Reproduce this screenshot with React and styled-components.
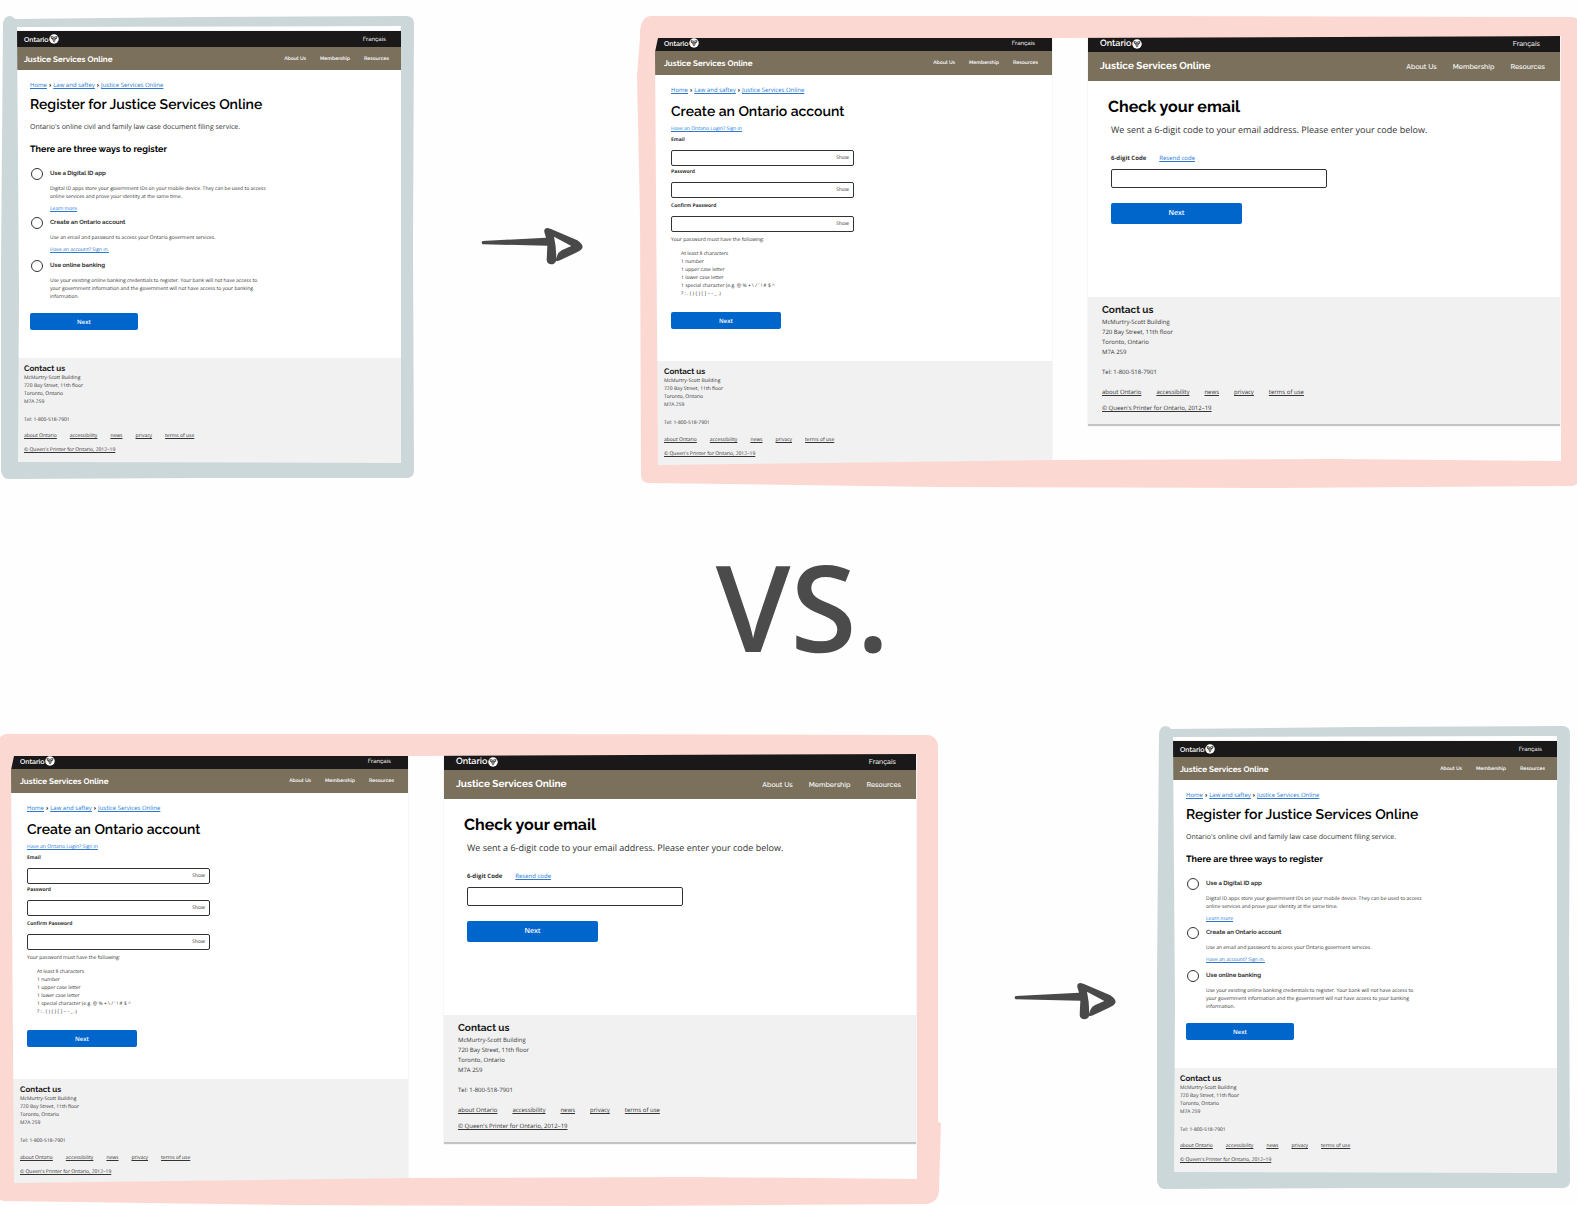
import React, { useId } from "react";
import styled, { createGlobalStyle, ThemeProvider } from "styled-components";

const GlobalStyle = createGlobalStyle`
  *, *::before, *::after { box-sizing: border-box; }
  html, body { margin: 0; background: #fefefe; }
  body { font-family: "Open Sans", "Noto Sans", sans-serif; color: #333; overflow-x: hidden; text-rendering: geometricPrecision; }
  h1, h2, h3, p, ul, address { margin: 0; padding: 0; font-style: normal; }
  ul { list-style: none; }
  button, input { font: inherit; color: inherit; margin: 0; padding: 0; border: 0; background: none; text-rendering: inherit; }
`;

const heading = `"Raleway", "Lato", "Open Sans", sans-serif`;

/* Type and spacing for the three magnifications at which screens are shown. */
const small = {
  bar: 16, band: 23, edge: 7, end: 12, brand: 7, lang: 6, langEnd: 15, title: 8, nav: 5, navWeight: 700, navGap: 14,
  h1: 14, h1Line: 18, h1Weight: 600, lead: 7, leadGap: 8, pad: "11px 13px 28px", button: 108, buttonHeight: 17, buttonText: 6,
  foot: 5, footLine: 8, contact: 8, contactLine: 11, footPad: "5px 7px 9px", linkGap: 13, footGap: 8,
};
const medium = {
  ...small, band: 24, edge: 9, end: 14, langEnd: 17, pad: "11px 16px 32px", button: 110,
  footPad: "5px 9px 20px", footGap: 9,
};
const large = {
  bar: 17, band: 29, edge: 12, end: 15, brand: 9, lang: 7, langEnd: 20, title: 10, nav: 7, navWeight: 600, navGap: 16,
  h1: 16, h1Line: 22, h1Weight: 700, lead: 9, leadGap: 6, pad: "15px 20px 73px", button: 131, buttonHeight: 21, buttonText: 7,
  foot: 6, footLine: 10, contact: 10, contactLine: 12, footPad: "8px 14px 11px", linkGap: 15, footGap: 10,
};

const Board = styled.main`
  display: flex;
  flex-direction: column;
  padding-top: 16px;
  overflow: hidden;
`;
const TopRow = styled.section`
  display: grid;
  grid-template-columns: 414fr 222fr 941fr;
  align-items: start;
`;
const BottomRow = styled.section`
  display: grid;
  grid-template-columns: 941fr 223fr 414fr;
  align-items: start;
  margin: 0 7px 0 -8px;
`;
const Versus = styled.p`
  padding-left: 28px;
  font-size: 120px;
  font-weight: 600;
  line-height: 238px;
  text-align: center;
  color: #4b4b4b;
`;

const Frame = styled.div`
  position: relative;
  display: grid;
`;
const BlueFrame = styled(Frame)`
  padding: 15px 13px 16px 17px;
`;
const PinkFrame = styled(Frame)`
  grid-template-columns: 397fr 472fr;
  column-gap: 36px;
  align-items: start;
  height: 472px;
  margin-top: ${(p) => (p.$lowered ? "8px" : 0)};
  padding: 19px 17px 0 19px;
`;
const Brushwork = styled.svg`
  position: absolute;
  inset: 0;
  width: 100%;
  height: 100%;
  overflow: visible;
  pointer-events: none;
`;
const ArrowSlot = styled.div`
  display: flex;
  justify-content: center;
  padding: ${(p) => p.$drop}px 0 0 ${(p) => p.$lead}px;
`;

const Screen = styled.article`
  display: flex;
  flex-direction: column;
  min-width: 0;
  background: #fff;
  box-shadow: 0 0 1px #ccc;
`;
const TopBar = styled.header`
  display: flex;
  align-items: center;
  justify-content: space-between;
  height: ${(p) => p.theme.bar}px;
  padding: 0 ${(p) => p.theme.langEnd}px 0 ${(p) => p.theme.edge}px;
  background: #1a1818;
  color: #fff;
  font-family: ${heading};
  font-size: ${(p) => p.theme.lang}px;
  font-weight: 500;
`;
const Brand = styled.span`
  display: flex;
  align-items: center;
  gap: 1px;
  font-size: ${(p) => p.theme.brand}px;
  font-weight: 600;
`;
const BarLink = styled.a`
  color: #eee;
  text-decoration: none;
`;
const Band = styled.div`
  display: flex;
  align-items: center;
  justify-content: space-between;
  height: ${(p) => p.theme.band}px;
  padding: 0 ${(p) => p.theme.end}px 0 ${(p) => p.theme.edge}px;
  background: #7b705b;
  color: #fff;
  font-family: ${heading};
`;
const SiteTitle = styled.span`
  font-size: ${(p) => p.theme.title}px;
  font-weight: 700;
`;
const Nav = styled.nav`
  display: flex;
  gap: ${(p) => p.theme.navGap}px;
  font-size: ${(p) => p.theme.nav}px;
  font-weight: ${(p) => p.theme.navWeight};
`;
const Body = styled.div`
  padding: ${(p) => p.theme.pad};
`;
const Crumbs = styled.nav`
  display: flex;
  gap: 2px;
  font-size: 6px;
  line-height: 8px;
  color: #000;
`;
const Link = styled.a`
  color: #2b78cf;
  text-decoration: underline;
`;
const Title = styled.h1`
  margin-top: ${(p) => p.$gap || 0}px;
  font-family: ${heading};
  font-size: ${(p) => p.theme.h1}px;
  line-height: ${(p) => p.theme.h1Line}px;
  font-weight: ${(p) => p.theme.h1Weight};
  color: #000;
`;
const Lead = styled.p`
  margin-top: ${(p) => p.theme.leadGap}px;
  font-size: ${(p) => p.theme.lead}px;
  line-height: 12px;
`;
const Subtitle = styled.h2`
  margin-top: 10px;
  font-family: ${heading};
  font-size: 9px;
  line-height: 12px;
  font-weight: 700;
  color: #000;
`;
const Options = styled.div`
  padding-top: 8px;
`;
const Option = styled.div`
  display: grid;
  grid-template-columns: 14px 1fr;
  column-gap: 6px;
  align-items: center;
  padding-top: ${(p) => p.$gap}px;
`;
const Radio = styled.input`
  appearance: none;
  width: 12px;
  height: 12px;
  margin-left: 1px;
  border: 1px solid #333;
  border-radius: 50%;
`;
const OptionLabel = styled.label`
  font-family: ${heading};
  font-size: 6px;
  line-height: 12px;
  font-weight: 700;
`;
const Detail = styled.div`
  grid-column: 2;
  display: grid;
  justify-items: start;
  gap: 4px;
  max-width: 218px;
  padding-top: 5px;
  font-size: 5px;
  line-height: 8px;
`;
const Next = styled.button`
  display: block;
  width: ${(p) => p.theme.button}px;
  height: ${(p) => p.theme.buttonHeight}px;
  margin-top: ${(p) => p.$gap}px;
  border-radius: 2px;
  background: #0066cc;
  color: #fff;
  font-size: ${(p) => p.theme.buttonText}px;
  font-weight: 600;
  text-align: center;
`;
const SignIn = styled.p`
  margin-top: 4px;
  font-size: 5px;
  line-height: 8px;
`;
const Field = styled.div`
  display: grid;
  gap: 6px;
  max-width: 183px;
  padding-top: ${(p) => p.$gap}px;
`;
const FieldLabel = styled.label`
  font-size: ${(p) => p.theme.foot}px;
  line-height: 8px;
  font-weight: 700;
`;
const InputBox = styled.div`
  display: flex;
  height: 16px;
  padding-right: 4px;
  border: 1px solid #333;
  border-radius: 2px;
`;
const Input = styled.input`
  flex: 1;
  min-width: 0;
  padding: 0 4px;
  font-size: 6px;
  outline: none;
`;
const Show = styled.button`
  font-size: 5px;
`;
const Rules = styled.div`
  padding-top: 4px;
  font-size: 5px;
  line-height: 8px;
`;
const RuleList = styled.ul`
  padding: 6px 0 0 10px;
`;
const CodeForm = styled.div`
  padding-left: 3px;
`;
const CodeHead = styled.div`
  display: flex;
  gap: 13px;
  margin-top: 17px;
  font-size: 6px;
  line-height: 10px;
`;
const CodeLabel = styled.label`
  font-weight: 700;
`;
const CodeInput = styled.input`
  display: block;
  width: 216px;
  height: 19px;
  margin-top: 6px;
  padding: 0 6px;
  border: 1px solid #333;
  border-radius: 2px;
  font-size: 8px;
`;
const Footer = styled.footer`
  padding: ${(p) => p.theme.footPad};
  border-bottom: ${(p) => (p.$ruled ? "2px solid #c4c4c4" : 0)};
  background: #f1f1f1;
  font-size: ${(p) => p.theme.foot}px;
  line-height: ${(p) => p.theme.footLine}px;
`;
const Contact = styled.h3`
  font-family: ${heading};
  font-size: ${(p) => p.theme.contact}px;
  line-height: ${(p) => p.theme.contactLine}px;
  font-weight: 700;
  color: #1a1a1a;
`;
const Phone = styled.p`
  margin-top: 10px;
`;
const FootLinks = styled.nav`
  display: flex;
  gap: ${(p) => p.theme.linkGap}px;
  margin: ${(p) => p.theme.footGap}px 0 6px;
`;
const FootLink = styled.a`
  color: inherit;
  text-decoration: underline;
`;

function Trillium() {
  return (
    <svg width="10" height="10" viewBox="0 0 20 20" aria-hidden="true">
      <circle cx="10" cy="10" r="9.5" fill="#fff" />
      <path d="M3 5 Q7 4 10 6 Q13 4 17 5 Q17 9 13 11 Q13 14 10 17 Q7 14 7 11 Q3 9 3 5Z" fill="#333" />
      <path d="M6 7 L9 8 M14 7 L11 8 M10 11 L10 14" stroke="#fff" strokeWidth="1.5" strokeLinecap="round" />
    </svg>
  );
}

function BlueBrush() {
  return (
    <Brushwork viewBox="0 0 414 462" preserveAspectRatio="none" aria-hidden="true">
      <path
        fill="#ccd7da"
        fillRule="evenodd"
        d="M3 7 Q4 1 9 0 Q13 0 15 3 L200 1 L407 0 Q414 1 414 7 L413 230 L414 455 Q413 461 406 461 L200 461 L8 462 Q2 461 1 454 L1 250 Z M17 11 L401 10 L401 446 L18 445 L19 280 Z"
      />
    </Brushwork>
  );
}

function PinkBrush() {
  return (
    <Brushwork viewBox="0 0 941 472" preserveAspectRatio="none" aria-hidden="true">
      <path
        fill="#fcd8d3"
        fillRule="evenodd"
        d="M4 22 Q3 2 14 0 L500 0 L936 1 Q945 2 946 12 L946 388 L949 389 L947 456 Q947 467 936 470 L640 472 L300 471 L12 467 Q5 466 5 459 L4 200 L1 60 Z M22 22 L420 22 L925 20 L925 445 L700 443 L416 444 L22 449 L19 36 Z"
      />
    </Brushwork>
  );
}

function Arrow() {
  return (
    <svg width="105" height="42" viewBox="30 45 315 126" role="img" aria-label="then">
      <path
        fill="#494949"
        fillRule="evenodd"
        d="M223 66 Q221 54 233 54 L243 57 L322 91 Q341 104 337 114 Q333 122 318 128 L270 151 Q262 155 259 152 Q254 163 244 163 Q231 162 230 150 L232 107 L38 103 Q32 98 38 93 L228 83 Z M252 80 L304 108 L275 121 Q261 129 259 147 Q259 110 252 80 Z"
      />
    </svg>
  );
}

function SiteHeader() {
  return (
    <>
      <TopBar>
        <Brand>Ontario<Trillium /></Brand>
        <BarLink href="#fr">Français</BarLink>
      </TopBar>
      <Band>
        <SiteTitle>Justice Services Online</SiteTitle>
        <Nav>
          <BarLink href="#about">About Us</BarLink>
          <BarLink href="#membership">Membership</BarLink>
          <BarLink href="#resources">Resources</BarLink>
        </Nav>
      </Band>
    </>
  );
}

function Breadcrumbs() {
  return (
    <Crumbs aria-label="Breadcrumb">
      <Link href="#home">Home</Link>
      <b>›</b>
      <Link href="#law">Law and saftey</Link>
      <b>›</b>
      <Link href="#jso">Justice Services Online</Link>
    </Crumbs>
  );
}

function SiteFooter({ ruled }) {
  return (
    <Footer $ruled={ruled}>
      <Contact>Contact us</Contact>
      <address>
        McMurtry-Scott Building<br />
        720 Bay Street, 11th floor<br />
        Toronto, Ontario<br />
        M7A 2S9
      </address>
      <Phone>Tel: 1-800-518-7901</Phone>
      <FootLinks>
        {["about Ontario", "accessibility", "news", "privacy", "terms of use"].map((t) => (
          <FootLink key={t} href={"#" + t.replace(/ /g, "-")}>{t}</FootLink>
        ))}
      </FootLinks>
      <FootLink href="#copyright">© Queen's Printer for Ontario, 2012–19</FootLink>
    </Footer>
  );
}

const ways = [
  { label: "Use a Digital ID app", gap: 4, text: "Digital ID apps store your government IDs on your mobile device. They can be used to access online services and prove your identity at the same time.", link: "Learn more" },
  { label: "Create an Ontario account", gap: 4, text: "Use an email and password to access your Ontario goverment services.", link: "Have an account? Sign in." },
  { label: "Use online banking", gap: 6, text: "Use your existing online banking credentials to register. Your bank will not have access to your government information and the government will not have access to your banking information." },
];

function RegisterScreen() {
  const id = useId();
  return (
    <ThemeProvider theme={small}>
      <Screen>
        <SiteHeader />
        <Body>
          <Breadcrumbs />
          <Title $gap={7}>Register for Justice Services Online</Title>
          <Lead>Ontario's online civil and family law case document filing service.</Lead>
          <Subtitle>There are three ways to register</Subtitle>
          <Options>
            {ways.map((w, i) => (
              <Option key={w.label} $gap={w.gap}>
                <Radio type="radio" name={id} id={id + i} />
                <OptionLabel htmlFor={id + i}>{w.label}</OptionLabel>
                <Detail>
                  <p>{w.text}</p>
                  {w.link && <Link href="#more">{w.link}</Link>}
                </Detail>
              </Option>
            ))}
          </Options>
          <Next type="button" $gap={12}>Next</Next>
        </Body>
        <SiteFooter />
      </Screen>
    </ThemeProvider>
  );
}

function PasswordField({ label, gap, type }) {
  const id = useId();
  return (
    <Field $gap={gap}>
      <FieldLabel htmlFor={id}>{label}</FieldLabel>
      <InputBox>
        <Input id={id} type={type} />
        <Show type="button">Show</Show>
      </InputBox>
    </Field>
  );
}

function AccountScreen() {
  return (
    <ThemeProvider theme={medium}>
      <Screen>
        <SiteHeader />
        <Body>
          <Breadcrumbs />
          <Title $gap={9}>Create an Ontario account</Title>
          <SignIn><Link href="#login">Have an Ontario Login? Sign in</Link></SignIn>
          <PasswordField label="Email" gap={3} type="email" />
          <PasswordField label="Password" gap={2} type="password" />
          <PasswordField label="Confirm Password" gap={4} type="password" />
          <Rules>
            <p>Your password must have the following:</p>
            <RuleList>
              <li>At least 8 characters</li>
              <li>1 number</li>
              <li>1 upper case letter</li>
              <li>1 lower case letter</li>
              <li>
                1 special character (e.g. @ % + \ / ' ! # $ ^<br />
                {"? : . ( ) { } [ ] ~ - _ .)"}
              </li>
            </RuleList>
          </Rules>
          <Next type="button" $gap={14}>Next</Next>
        </Body>
        <SiteFooter />
      </Screen>
    </ThemeProvider>
  );
}

function EmailScreen() {
  const id = useId();
  return (
    <ThemeProvider theme={large}>
      <Screen>
        <SiteHeader />
        <Body>
          <Title>Check your email</Title>
          <CodeForm>
            <Lead>We sent a 6-digit code to your email address. Please enter your code below.</Lead>
            <CodeHead>
              <CodeLabel htmlFor={id}>6-digit Code</CodeLabel>
              <Link href="#resend">Resend code</Link>
            </CodeHead>
            <CodeInput id={id} type="text" inputMode="numeric" />
            <Next type="button" $gap={15}>Next</Next>
          </CodeForm>
        </Body>
        <SiteFooter ruled />
      </Screen>
    </ThemeProvider>
  );
}

function RegisterPanel() {
  return (
    <BlueFrame>
      <RegisterScreen />
      <BlueBrush />
    </BlueFrame>
  );
}

function AccountPanel({ lowered }) {
  return (
    <PinkFrame $lowered={lowered}>
      <AccountScreen />
      <EmailScreen />
      <PinkBrush />
    </PinkFrame>
  );
}

export default function App() {
  return (
    <>
      <GlobalStyle />
      <Board>
        <TopRow>
          <RegisterPanel />
          <ArrowSlot $drop={209} $lead={14}><Arrow /></ArrowSlot>
          <AccountPanel />
        </TopRow>
        <Versus>VS.</Versus>
        <BottomRow>
          <AccountPanel lowered />
          <ArrowSlot $drop={254} $lead={42}><Arrow /></ArrowSlot>
          <RegisterPanel />
        </BottomRow>
      </Board>
    </>
  );
}
